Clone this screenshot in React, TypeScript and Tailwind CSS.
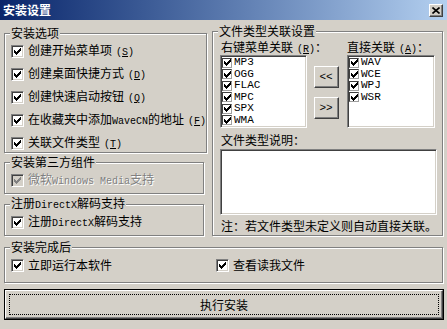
import type { ReactNode } from 'react'

const MONO = "font-['Liberation_Mono','Noto_Sans_CJK_SC',monospace]"

const sunken =
  'border border-t-[#808080] border-l-[#808080] border-r-white border-b-white shadow-[inset_1px_1px_0_#404040,inset_-1px_-1px_0_#d4d0c8]'

const raised =
  'border border-t-white border-l-white border-r-[#404040] border-b-[#404040] shadow-[inset_-1px_-1px_0_#808080] bg-[#d4d0c8]'

function Tick({ color = '#000' }: { color?: string }) {
  return (
    <svg width="7" height="7" viewBox="0 0 7 7" shapeRendering="crispEdges">
      <path
        d="M0 2h1v1h1v1h1v-1h1v-1h1v-1h1v-1h1v3h-1v1h-1v1h-1v1h-1v1h-1v-1h-1v-1h-1z"
        fill={color}
      />
    </svg>
  )
}

function Box({ disabled = false }: { disabled?: boolean }) {
  return (
    <span
      className={`${sunken} flex h-[13px] w-[13px] shrink-0 items-center justify-center ${
        disabled ? 'bg-[#d4d0c8]' : 'bg-white'
      }`}
    >
      <Tick color={disabled ? '#808080' : '#000'} />
    </span>
  )
}

function Latin({ children }: { children: ReactNode }) {
  return <span className={`${MONO} text-[10px]`}>{children}</span>
}

function Key({ k }: { k: string }) {
  return (
    <span className={`${MONO} ml-[4px] text-[10px]`}>
      (<span className="underline">{k}</span>)
    </span>
  )
}

function CheckRow({
  children,
  disabled = false,
  className = '',
}: {
  children: ReactNode
  disabled?: boolean
  className?: string
}) {
  return (
    <div className={`flex items-center gap-[4px] ${className}`}>
      <Box disabled={disabled} />
      <span
        className={`leading-[14px] whitespace-nowrap ${
          disabled ? 'text-[#808080] [text-shadow:1px_1px_0_#fff]' : ''
        }`}
      >
        {children}
      </span>
    </div>
  )
}

function Group({
  title,
  className = '',
  children,
}: {
  title: ReactNode
  className?: string
  children?: ReactNode
}) {
  return (
    <fieldset
      className={`border border-[#808080] shadow-[inset_1px_1px_0_#fff,1px_1px_0_#fff] ${className}`}
    >
      <legend className="ml-[5px] bg-[#d4d0c8] px-[1px] leading-[14px] whitespace-nowrap">
        {title}
      </legend>
      {children}
    </fieldset>
  )
}

function ListBox({ items }: { items: string[] }) {
  return (
    <div className={`${sunken} h-[73px] bg-white pt-[1px] pl-[1px]`}>
      {items.map((it) => (
        <div key={it} className="flex h-[11.5px] items-center gap-[2px]">
          <span className="flex h-[10px] w-[10px] items-center justify-center border border-t-[#404040] border-l-[#404040] border-r-[#a0a0a0] border-b-[#a0a0a0] bg-white">
            <Tick />
          </span>
          <span className={`${MONO} text-[11px] leading-[11px]`}>{it}</span>
        </div>
      ))}
    </div>
  )
}

function SmallButton({ label }: { label: string }) {
  return (
    <div
      className={`${raised} flex h-[22px] w-[25px] items-center justify-center ${MONO} text-[11px]`}
    >
      {label}
    </div>
  )
}

export default function App() {
  return (
    <div className="h-[329px] w-[447px] overflow-hidden bg-[#d4d0c8] font-['Noto_Sans_CJK_SC','Noto_Sans',sans-serif] text-[12px] text-black">
      {/* title bar */}
      <div className="flex h-[20px] items-center justify-between bg-linear-to-r from-[#0a246a] to-[#b4d0f0] pr-[4px] pl-[3px]">
        <span className="leading-[14px] font-bold text-white">安装设置</span>
        <div className={`${raised} flex h-[13px] w-[14px] items-center justify-center`}>
          <svg width="8" height="7" viewBox="0 0 8 7">
            <path d="M0.5 0.5L7.5 6.5M7.5 0.5L0.5 6.5" stroke="#000" strokeWidth="1.6" />
          </svg>
        </div>
      </div>

      <div className="px-[4px] pt-[4px]">
        <div className="flex items-start gap-[8px]">
          {/* left column */}
          <div className="flex w-[200px] flex-col gap-[2px] pt-[2px]">
            <Group title="安装选项" className="h-[127px]">
              <div className="flex flex-col pl-[6px]">
                <CheckRow className="h-[23px]">
                  创建开始菜单项
                  <Key k="S" />
                </CheckRow>
                <CheckRow className="h-[23px]">
                  创建桌面快捷方式
                  <Key k="D" />
                </CheckRow>
                <CheckRow className="h-[23px]">
                  创建快速启动按钮
                  <Key k="Q" />
                </CheckRow>
                <CheckRow className="h-[23px]">
                  在收藏夹中添加<Latin>WaveCN</Latin>的地址
                  <Key k="F" />
                </CheckRow>
                <CheckRow className="h-[22px]">
                  关联文件类型
                  <Key k="T" />
                </CheckRow>
              </div>
            </Group>

            <Group title="安装第三方组件" className="h-[39px]">
              <CheckRow disabled className="mt-[2px] h-[18px] pl-[6px]">
                微软<Latin>Windows Media</Latin>支持
              </CheckRow>
            </Group>

            <Group
              title={
                <>
                  注册<Latin>DirectX</Latin>解码支持
                </>
              }
              className="h-[40px]"
            >
              <CheckRow className="h-[18px] pl-[6px]">
                注册<Latin>DirectX</Latin>解码支持
              </CheckRow>
            </Group>
          </div>

          {/* right column */}
          <Group title="文件类型关联设置" className="h-[212px] w-[230px]">
            <div className="flex flex-col pr-[5px] pl-[7px]">
              <div className="mt-[3px] flex h-[14px] items-center">
                <span className="w-[127px] pl-[1px] leading-[14px]">
                  右键菜单关联
                  <Key k="R" />：
                </span>
                <span className="leading-[14px]">
                  直接关联
                  <Key k="A" />：
                </span>
              </div>
              <div className="flex">
                <div className="w-[87px]">
                  <ListBox items={['MP3', 'OGG', 'FLAC', 'MPC', 'SPX', 'WMA']} />
                </div>
                <div className="flex w-[40px] flex-col items-center gap-[9px] pt-[11px] pr-[2px]">
                  <SmallButton label="<<" />
                  <SmallButton label=">>" />
                </div>
                <div className="w-[88px]">
                  <ListBox items={['WAV', 'WCE', 'WPJ', 'WSR']} />
                </div>
              </div>
              <div className="mt-[5px] pl-[1px] leading-[14px]">文件类型说明：</div>
              <div className={`${sunken} mt-[2px] h-[66px] bg-white`} />
              <div className="mt-[4px] pl-[1px] leading-[14px] whitespace-nowrap">
                注：若文件类型未定义则自动直接关联。
              </div>
            </div>
          </Group>
        </div>

        <Group title="安装完成后" className="mt-[4px] h-[43px] w-[439px]">
          <div className="mt-[2px] flex pl-[6px]">
            <CheckRow className="h-[18px] w-[205px]">立即运行本软件</CheckRow>
            <CheckRow className="h-[18px]">查看读我文件</CheckRow>
          </div>
        </Group>

        <div className="mt-[6px] h-[31px] w-[440px] border border-black">
          <div className={`${raised} flex h-full w-full p-[3px]`}>
            <div className="flex flex-1 items-center justify-center border border-dotted border-black leading-[14px]">
              执行安装
            </div>
          </div>
        </div>
      </div>
    </div>
  )
}
